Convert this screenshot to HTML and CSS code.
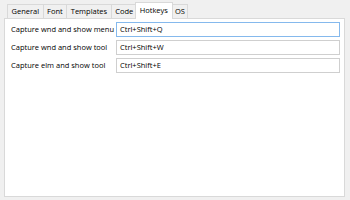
FILE: index.html
```html
<!DOCTYPE html>
<html>
<head>
<meta charset="utf-8">
<link rel="stylesheet" href="styles.css">
</head>
<body>
<div class="tabs">
  <div class="tab">General</div>
  <div class="tab">Font</div>
  <div class="tab">Templates</div>
  <div class="tab">Code</div>
  <div class="tab active">Hotkeys</div>
  <div class="tab">OS</div>
</div>
<div class="panel">
  <div class="row">
    <span class="label">Capture wnd and show menu</span>
    <div class="input focus">Ctrl+Shift+Q</div>
  </div>
  <div class="row">
    <span class="label">Capture wnd and show tool</span>
    <div class="input">Ctrl+Shift+W</div>
  </div>
  <div class="row">
    <span class="label">Capture elm and show tool</span>
    <div class="input">Ctrl+Shift+E</div>
  </div>
</div>
</body>
</html>
```
FILE: styles.css
```css
html, body {
  margin: 0;
  height: 100%;
}
body {
  background: #f0f0f0;
  padding: 2px 5px 3px 4px;
  box-sizing: border-box;
  font-family: "Open Sans", "Noto Sans", sans-serif;
  font-size: 7.5px;
  color: #000;
  display: flex;
  flex-direction: column;
}
.tabs {
  display: flex;
  align-items: flex-end;
  height: 16px;
  padding-left: 3px;
  position: relative;
  z-index: 1;
}
.tab {
  height: 14px;
  line-height: 13px;
  box-sizing: border-box;
  border: 1px solid #d9d9d9;
  border-bottom: none;
  background: #f0f0f0;
  padding: 0 3.5px;
  margin-left: -1px;
  white-space: nowrap;
}
.tab:first-child {
  margin-left: 0;
}
.tab.active {
  height: 17px;
  line-height: 15px;
  background: #fff;
  margin: 0 -2px -1px -3px;
  padding: 0 4px;
  position: relative;
  z-index: 2;
}
.tab.active + .tab {
  margin-left: 1px;
  padding: 0 2px;
}
.panel {
  flex: 1;
  background: #fff;
  border: 1px solid #d9d9d9;
  padding: 3px 4px 0 6px;
  display: flex;
  flex-direction: column;
  gap: 3px;
}
.row {
  display: grid;
  grid-template-columns: 105px 1fr;
  align-items: center;
  height: 15px;
}
.label {
  white-space: nowrap;
  line-height: 15px;
}
.input {
  height: 15px;
  box-sizing: border-box;
  border: 1px solid #cfcfcf;
  padding-left: 3px;
  line-height: 13px;
  white-space: nowrap;
}
.input.focus {
  border-color: #85b9ed;
}
```
